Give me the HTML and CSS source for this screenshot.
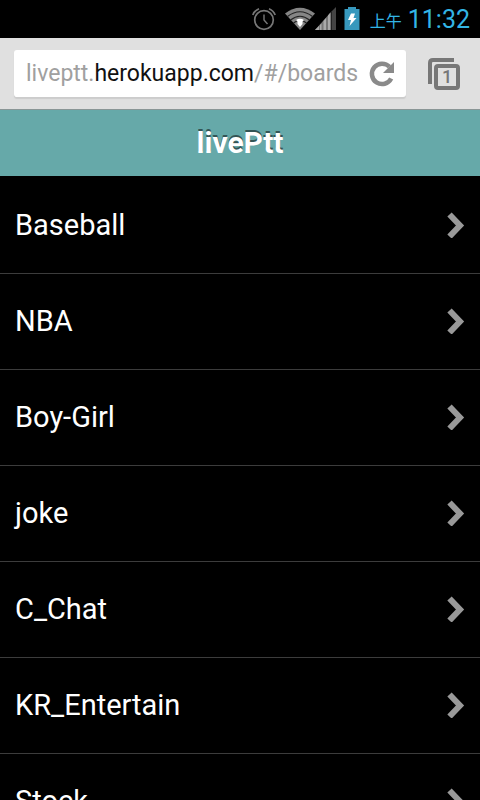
FILE: index.html
```html
<!DOCTYPE html>
<html lang="zh-Hant">
<head>
<meta charset="utf-8">
<meta name="viewport" content="width=device-width, initial-scale=1">
<title>livePtt</title>
<link rel="stylesheet" href="styles.css">
</head>
<body>
<svg class="defs" aria-hidden="true">
  <symbol id="chevron" viewBox="0 0 18 26">
    <path d="M2.500 2.500L13 13.500L2.500 24.500" fill="none" stroke="#999" stroke-width="6"/>
  </symbol>
</svg>
<div class="statusbar">
  <svg class="alarm" width="24" height="26" viewBox="0 0 24 26" fill="none" stroke="#777" aria-hidden="true">
    <circle cx="12" cy="14" r="9.300" stroke-width="1.700"/>
    <path d="M12 8.500V14L15.500 18" stroke-width="1.400"/>
    <path d="M0.800 9Q2.500 4.500 7 2.700M23.200 9Q21.500 4.500 17 2.700" stroke-width="1.700"/>
  </svg>
  <svg class="wifi" width="30" height="24" viewBox="0 0 30 24" aria-hidden="true">
    <path d="M0 6.500Q15 -5 30 6.500L15 23Z" fill="#858585"/>
    <path d="M2.500 9.500Q15 0 27.500 9.500M5.500 13Q15 5.500 24.500 13M8.500 16Q15 10.500 21.500 16" fill="none" stroke="#222" stroke-width="1.200"/>
    <path d="M11 13Q15 10.500 19 13L17.500 14.500V17L15 20L12.500 17V14.500Z" fill="#fff"/>
  </svg>
  <svg class="signal" width="22" height="24" viewBox="0 0 22 24" aria-hidden="true">
    <path d="M0 23L16 5V23Z" fill="#777"/>
    <path d="M0 23L4 19V23ZM5 18L6.500 16.500V23H5ZM8.500 14L11 11V23H8.500ZM13 8.500L15 6V23H13Z" fill="#aaa"/>
    <path d="M16.500 4.500L21 0V23H16.500Z" fill="#444"/>
  </svg>
  <svg class="battery" width="16" height="24" viewBox="0 0 16 24" aria-hidden="true">
    <path d="M4 0H12V2H15.500V23H0.500V2H4Z" fill="#3798bd"/>
    <path d="M7 6.500H11L9.500 11H12.500L5.500 19L7 13H4Z" fill="#fff"/>
  </svg>
  <span class="ampm">上午</span>
  <time class="clock">11:32</time>
</div>
<div class="toolbar">
  <div class="omnibox">
    <div class="url" role="textbox" aria-label="URL" contenteditable="true" spellcheck="false">liveptt.<b>herokuapp.com</b>/#/boards</div>
    <button class="reload" type="button" aria-label="Reload">
      <svg width="28" height="28" viewBox="0 0 28 28" aria-hidden="true">
        <path d="M21.500 6.800A10.200 10.200 0 1 0 23.200 18.500" fill="none" stroke="#8a8a8a" stroke-width="4.500"/>
        <path d="M26 2V13H15L18.500 9.500L21.500 6.500Z" fill="#8a8a8a"/>
      </svg>
    </button>
  </div>
  <button class="tabs" type="button" aria-label="1 open tab">
    <svg width="34" height="34" viewBox="0 0 34 34" fill="none" stroke="#777" aria-hidden="true">
      <path d="M27 3H6Q3 3 3 6V27" stroke-width="4"/>
      <rect x="9" y="9" width="22" height="22" rx="2" stroke-width="4"/>
    </svg>
    <span>1</span>
  </button>
</div>
<header class="title"><h1>livePtt</h1></header>
<main>
  <ul class="boards">
    <li><a href="#/boards/Baseball">Baseball<svg><use href="#chevron"/></svg></a></li>
    <li><a href="#/boards/NBA">NBA<svg><use href="#chevron"/></svg></a></li>
    <li><a href="#/boards/Boy-Girl">Boy-Girl<svg><use href="#chevron"/></svg></a></li>
    <li><a href="#/boards/joke">joke<svg><use href="#chevron"/></svg></a></li>
    <li><a href="#/boards/C_Chat">C_Chat<svg><use href="#chevron"/></svg></a></li>
    <li><a href="#/boards/KR_Entertain">KR_Entertain<svg><use href="#chevron"/></svg></a></li>
    <li><a href="#/boards/Stock">Stock<svg><use href="#chevron"/></svg></a></li>
  </ul>
</main>
</body>
</html>
```
FILE: styles.css
```css
* {
  box-sizing: border-box;
}

html {
  scrollbar-width: none;
}

body {
  margin: 0;
  background: #000;
  color: #fff;
  font-family: Roboto, "Noto Sans CJK TC", sans-serif;
}

svg {
  display: block;
  flex: none;
}

button {
  border: 0;
  padding: 0;
  background: none;
}

.defs {
  position: absolute;
  width: 0;
  height: 0;
}

.statusbar {
  display: flex;
  justify-content: flex-end;
  align-items: center;
  height: 38px;
  padding-right: 10px;
  color: #33b5e5;
}

.wifi {
  margin-left: 9px;
}

.signal {
  margin-right: 7px;
}

.ampm {
  margin: 2px 6px 0 10px;
  font-size: 16px;
  font-weight: 400;
}

.clock {
  font-size: 25px;
}

.toolbar {
  display: flex;
  align-items: center;
  gap: 21px;
  height: 72px;
  padding: 0 19px 0 14px;
  background: #e0e0e0;
  border-bottom: 1px solid #8a9696;
}

.omnibox {
  display: flex;
  flex: 1;
  align-items: center;
  min-width: 0;
  height: 47px;
  padding: 0 10px 0 12px;
  background: #fff;
  border-radius: 3px;
  box-shadow: 0 2px 1px #ccc;
}

.url {
  flex: 1;
  min-width: 0;
  margin-right: 10px;
  overflow: hidden;
  white-space: nowrap;
  color: #a0a0a0;
  font-size: 23px;
  line-height: 32px;
  outline: none;
}

.url b {
  color: #111;
  font-weight: 400;
}

.tabs {
  position: relative;
  color: #777;
  font: 500 18px/34px Roboto, sans-serif;
}

.tabs span {
  position: absolute;
  inset: 3px 0 0 6px;
}

.title {
  height: 66px;
  background: #66a9a9;
  text-align: center;
}

.title h1 {
  margin: 0;
  font-size: 30px;
  font-weight: 700;
  line-height: 66px;
  text-shadow: 0 -2px 0 #335555;
}

.boards {
  margin: 0;
  padding: 2px 0 0;
  list-style: none;
}

.boards a {
  display: flex;
  align-items: center;
  justify-content: space-between;
  height: 96px;
  padding: 0 15px 2px;
  border-bottom: 1px solid #3c3c3c;
  color: #fff;
  font-size: 29px;
  text-decoration: none;
}

.boards svg {
  width: 18px;
  height: 26px;
  overflow: visible;
}
```
